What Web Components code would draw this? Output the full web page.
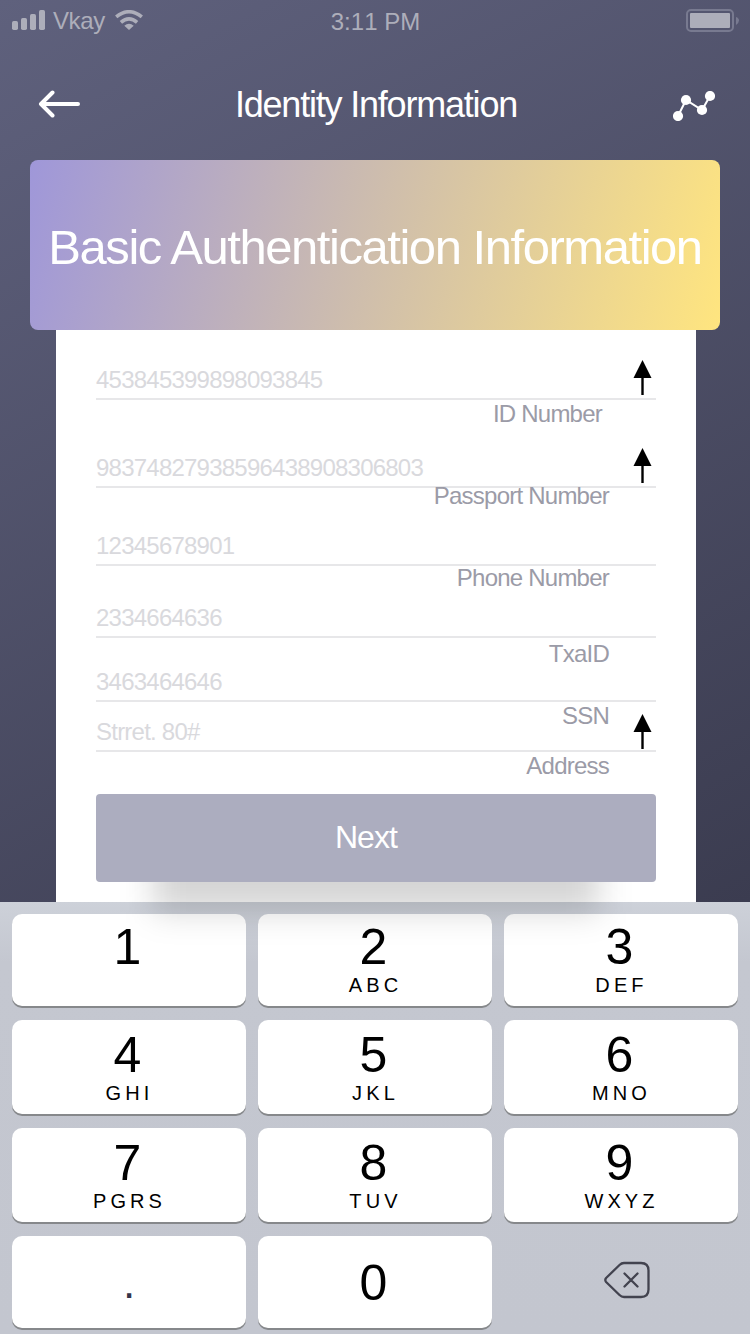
<!DOCTYPE html>
<html lang="en">
<head>
<meta charset="utf-8">
<title>Identity Information</title>
<style>
html,body{margin:0;padding:0}
body{width:750px;height:1334px;overflow:hidden;font-family:"Liberation Sans",Arial,sans-serif}
</style>
</head>
<body>
<identity-screen></identity-screen>
<script>
function define(name, html, setup) {
  const template = document.createElement('template');
  template.innerHTML = html;
  customElements.define(name, class extends HTMLElement {
    connectedCallback() {
      if (this.shadowRoot) return;
      const root = this.attachShadow({ mode: 'open' });
      root.append(template.content.cloneNode(true));
      if (setup) setup(this, root);
    }
  });
}

define('status-bar', `
<style>
:host{display:grid;grid-template-columns:1fr auto 1fr;height:42px;padding:0 11px 0 12px;box-sizing:border-box;color:#adaeba;font-size:24px;line-height:28px;font-kerning:none}
.left{display:flex;padding-top:7px}
.left span{margin-left:8px;letter-spacing:-.4px}
.left .wifi{margin:3px 0 0 10px}
.bars{margin-top:3px}
.time{padding-top:8px;letter-spacing:.05px}
.right{display:flex;justify-content:flex-end;padding-top:9px}
svg{display:block}
</style>
<div class="left">
<svg class="bars" width="33" height="20" fill="#adaeba"><rect y="11" width="6" height="9" rx="1.7"/><rect x="9" y="8" width="6" height="12" rx="1.7"/><rect x="18" y="4" width="6" height="16" rx="1.7"/><rect x="27" width="6" height="20" rx="1.7"/></svg>
<span>Vkay</span>
<svg class="wifi" width="28" height="20" viewBox="0 0 28 20" fill="none" stroke="#adaeba" stroke-width="3.6"><path d="M1.200 6.900Q14-3.400 26.800 6.900M5.900 12.300Q14 5.300 22.100 12.300"/><path d="M9.300 15.700Q14 11.700 18.700 15.700L14 20Z" fill="#adaeba" stroke="none"/></svg>
</div>
<div class="time">3:11 PM</div>
<div class="right"><svg width="53" height="23"><rect x="1" y="1" width="46" height="21" rx="4" fill="none" stroke="#787a90" stroke-width="2"/><rect x="4" y="4" width="40" height="15" rx="1" fill="#adaeba"/><path d="M50 8Q53 9 53 11.500T50 16Z" fill="#787a90"/></svg></div>`);

define('nav-header', `
<style>
:host{display:grid;grid-template-columns:1fr auto 1fr;align-items:center;height:118px;padding:0 35px 0 38px;box-sizing:border-box;color:#fff}
h1{margin:7px 1px 0 0;font-size:36px;line-height:42px;font-weight:400;letter-spacing:-1.2px;white-space:nowrap}
.chart{justify-self:end}
svg{display:block}
</style>
<svg width="42" height="28" viewBox="0 0 42 28" style="margin-top:5px" fill="none" stroke="#fff" stroke-width="4" stroke-linecap="round" stroke-linejoin="round"><path d="M14.500 2.500 3 14 14.500 25.500M4 14H40"/></svg>
<h1><slot></slot></h1>
<svg class="chart" width="42" height="30" viewBox="0 0 42 30" style="margin-top:10px" fill="#fff"><path d="M5 25 13 9 29 19 37 5" fill="none" stroke="#fff" stroke-width="2"/><circle cx="5" cy="25" r="5.100"/><circle cx="13" cy="9" r="5.100"/><circle cx="29" cy="19" r="5.100"/><circle cx="37" cy="5" r="5.100"/></svg>`);

define('info-banner', `
<style>
:host{display:flex;justify-content:center;align-items:center;height:170px;margin:0 30px;border-radius:8px;background:linear-gradient(104deg,#9f97d9,#ffe57f);color:#fff;box-sizing:border-box;padding-top:4px}
h2{margin:0;font-size:49px;line-height:56px;font-weight:400;letter-spacing:-1.46px;white-space:nowrap}
</style>
<h2><slot></slot></h2>`);

define('form-field', `
<style>
:host{display:flex;align-items:flex-end;position:relative;height:var(--h);padding-bottom:4px;box-sizing:border-box;border-bottom:2px solid #e7e7e9}
.value{font-size:24px;line-height:28px;letter-spacing:-.77px;color:#d9d9dd;font-kerning:none;white-space:nowrap}
.label{position:absolute;right:var(--right,47px);top:calc(100% + 2px + var(--drop,0px));font-size:24px;line-height:28px;letter-spacing:-.77px;color:#9b9ba7;white-space:nowrap}
svg{position:absolute;right:4px;bottom:var(--arrow,3px);display:none}
:host([arrow]) svg{display:block}
</style>
<span class="value"></span><span class="label"><slot></slot></span>
<svg width="19" height="35"><path d="M9.500 0 18.500 18H.5Z"/><path d="M8.300 17h2.400v18H8.300z"/></svg>`,
(host, root) => { root.querySelector('.value').textContent = host.getAttribute('value'); });

define('next-button', `
<style>
:host{display:block;position:relative;isolation:isolate;height:88px}
:host::before{content:"";position:absolute;z-index:-1;left:57px;right:57px;top:40px;bottom:-30px;background:rgba(0,0,0,.165);filter:blur(16px)}
button{display:block;width:100%;height:88px;border:0;border-radius:4px;background:#acadbf;color:#fff;font:32px/38px "Liberation Sans",Arial,sans-serif;letter-spacing:-.9px;padding:0 20px 2px 0}
</style>
<button><slot></slot></button>`);

define('form-card', `
<style>
:host{display:flex;flex-direction:column;position:relative;z-index:1;height:572px;margin:0 54px 0 56px;padding:0 40px;box-sizing:border-box;background:#fff}
next-button{margin-top:42px}
</style>
<form-field value="453845399898093845" arrow style="--h:70px;--right:54px">ID Number</form-field>
<form-field value="98374827938596438908306803" arrow style="--h:88px;--drop:-6px">Passport Number</form-field>
<form-field value="12345678901" style="--h:78px;--drop:-2px">Phone Number</form-field>
<form-field value="2334664636" style="--h:72px;--drop:2px">TxaID</form-field>
<form-field value="3463464646" style="--h:64px">SSN</form-field>
<form-field value="Strret. 80#" arrow style="--h:50px;--arrow:1px">Address</form-field>
<next-button>Next</next-button>`);

define('pad-key', `
<style>
:host{display:flex;flex-direction:column;align-items:center;box-sizing:border-box;padding:var(--pad,5px) 3px 0 0;border-radius:10px;background:#fff;box-shadow:0 2px 0 #86888b;color:#000}
.digit{font-size:50px;line-height:56px;height:56px}
.letters{font-size:20px;line-height:24px;letter-spacing:4.1px;margin:var(--gap,-2px) -4px 0 0;white-space:nowrap}
:host([dot]) .digit{font-size:44px;color:#34344a;padding-left:3px}
</style>
<span class="digit"><slot></slot></span><span class="letters"></span>`,
(host, root) => { root.querySelector('.letters').textContent = host.getAttribute('letters') || ''; });

define('delete-key', `
<style>:host{display:flex;align-items:center;justify-content:center}svg{display:block;margin:-4px 0 0 11px}</style>
<svg width="46" height="38" viewBox="0 0 46 38" fill="none" stroke="#42434f" stroke-width="2.300" stroke-linecap="round" stroke-linejoin="round"><path d="M20 2H37Q44.500 2 44.500 9.500V28.500Q44.500 36 37 36H20Q17.500 36 15.500 34L2.100 21Q.5 19 2.100 17L15.500 4Q17.500 2 20 2ZM20.500 12.500 33.500 25.500M33.500 12.500 20.500 25.500"/></svg>`);

define('number-pad', `
<style>
:host{display:grid;grid-template-columns:repeat(3,234px);grid-template-rows:92px 94px 94px 92px;gap:14px 12px;height:432px;box-sizing:border-box;padding:12px;background:linear-gradient(#cdd1d9,#c4c7d0 60px,#c3c6cf)}
.mid{--pad:7px;--gap:-2px}
.last{--pad:19px}
</style>
<pad-key>1</pad-key><pad-key letters="ABC">2</pad-key><pad-key letters="DEF">3</pad-key>
<pad-key class="mid" letters="GHI">4</pad-key><pad-key class="mid" letters="JKL">5</pad-key><pad-key class="mid" letters="MNO">6</pad-key>
<pad-key class="mid" letters="PGRS">7</pad-key><pad-key class="mid" letters="TUV">8</pad-key><pad-key class="mid" letters="WXYZ">9</pad-key>
<pad-key class="last" dot>.</pad-key><pad-key class="last">0</pad-key><delete-key></delete-key>`);

define('identity-screen', `
<style>
:host{display:flex;flex-direction:column;width:750px;height:1334px;overflow:hidden;background:linear-gradient(152deg,#5f617d,#3b3c50) 0 0/750px 902px no-repeat}
</style>
<status-bar></status-bar>
<nav-header>Identity Information</nav-header>
<info-banner>Basic Authentication Information</info-banner>
<form-card></form-card>
<number-pad></number-pad>`);
</script>
</body>
</html>
